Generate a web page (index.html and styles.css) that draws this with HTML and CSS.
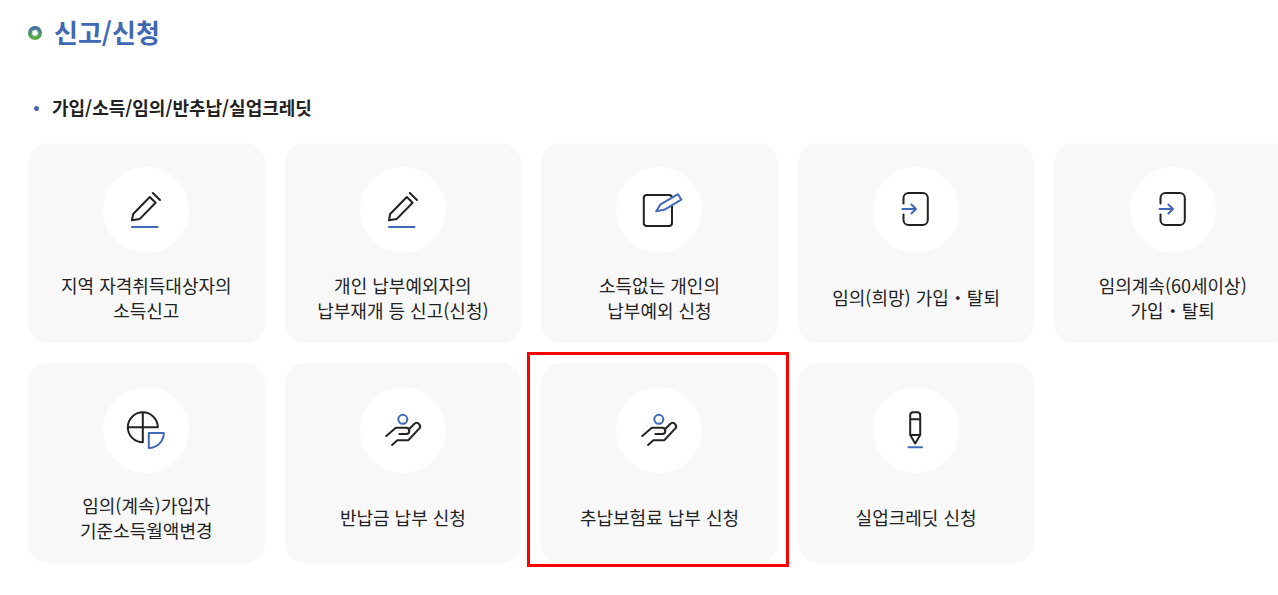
FILE: index.html
```html
<!DOCTYPE html>
<html lang="ko">
<head>
    <meta charset="UTF-8">
    <meta name="viewport" content="width=device-width, initial-scale=1.0">
    <title>신고/신청</title>
    <link rel="stylesheet" href="styles.css">
</head>
<body>
    <svg class="symbols" aria-hidden="true">
        <symbol id="icon-edit" viewBox="0 0 86 86">
            <path d="M29 53.3L30.2 47L46.8 30L52.6 35.7L36.6 52.1ZM49.8 26L57 33"/>
            <path class="blue" d="M29 60H54.5"/>
        </symbol>
        <symbol id="icon-note" viewBox="0 0 86 86">
            <rect x="27.8" y="28" width="28.2" height="31" rx="3"/>
            <path class="blue pen" d="M40.2 44.2L44.2 37.7L62 27.2L65.3 32.6L48.2 42.8Z"/>
        </symbol>
        <symbol id="icon-enter" viewBox="0 0 86 86">
            <path d="M30.5 36.5V31A5 5 0 0 1 35.5 26H49.8A5 5 0 0 1 54.8 31V53A5 5 0 0 1 49.8 58H35.5A5 5 0 0 1 30.5 53V47.5"/>
            <path class="blue" d="M29.5 42H43M38.4 37.5L43 42L38.4 46.5"/>
        </symbol>
        <symbol id="icon-chart" viewBox="0 0 86 86">
            <path d="M39.8 25.2V55.3A15 15 0 1 1 54.8 40.3H24.8"/>
            <path class="blue" d="M45.8 46H60.8A15 15 0 0 1 45.8 61Z"/>
        </symbol>
        <symbol id="icon-hand" viewBox="0 0 86 86">
            <circle class="blue" cx="42.8" cy="32.3" r="4.5"/>
            <path d="M26.3 49L35.8 40.8H46.2A3.1 3.1 0 0 1 46.2 47H39.4"/>
            <path d="M48.8 42.5L54.2 37A3.4 3.4 0 0 1 59.2 41.6L48.2 53.3H37.4L32.1 58"/>
        </symbol>
        <symbol id="icon-pencil" viewBox="0 0 86 86">
            <path d="M37.2 48V28.3A3 3 0 0 1 40.2 25.3H44.2A3 3 0 0 1 47.2 28.3V48L42.2 56.5ZM37.2 32.3H47.2M37.2 48H47.2"/>
            <path class="blue" d="M35.5 60.3H49"/>
        </symbol>
    </svg>

    <main>
        <h1>신고/신청</h1>
        <h2>가입/소득/임의/반추납/실업크레딧</h2>
        <ul class="menu">
            <li><a class="card" href="#">
                <span class="icon"><svg><use href="#icon-edit"/></svg></span>
                <span class="name">지역 자격취득대상자의<br>소득신고</span>
            </a></li>
            <li><a class="card" href="#">
                <span class="icon"><svg><use href="#icon-edit"/></svg></span>
                <span class="name">개인 납부예외자의<br>납부재개 등 신고(신청)</span>
            </a></li>
            <li><a class="card" href="#">
                <span class="icon"><svg><use href="#icon-note"/></svg></span>
                <span class="name">소득없는 개인의<br>납부예외 신청</span>
            </a></li>
            <li><a class="card" href="#">
                <span class="icon"><svg><use href="#icon-enter"/></svg></span>
                <span class="name">임의(희망) 가입・탈퇴</span>
            </a></li>
            <li><a class="card" href="#">
                <span class="icon"><svg><use href="#icon-enter"/></svg></span>
                <span class="name">임의계속(60세이상)<br>가입・탈퇴</span>
            </a></li>
            <li><a class="card" href="#">
                <span class="icon"><svg><use href="#icon-chart"/></svg></span>
                <span class="name">임의(계속)가입자<br>기준소득월액변경</span>
            </a></li>
            <li><a class="card" href="#">
                <span class="icon"><svg><use href="#icon-hand"/></svg></span>
                <span class="name">반납금 납부 신청</span>
            </a></li>
            <li><a class="card selected" href="#">
                <span class="icon"><svg><use href="#icon-hand"/></svg></span>
                <span class="name">추납보험료 납부 신청</span>
            </a></li>
            <li><a class="card" href="#">
                <span class="icon"><svg><use href="#icon-pencil"/></svg></span>
                <span class="name">실업크레딧 신청</span>
            </a></li>
        </ul>
    </main>
</body>
</html>
```
FILE: styles.css
```css
* {
    box-sizing: border-box;
}
body {
    margin: 0;
    background-color: #ffffff;
    color: #222222;
    font-family: "Noto Sans CJK KR", sans-serif;
    font-size: 18px;
    overflow-x: hidden;
}
main {
    padding: 13px 0 32px 28px;
    /* the card grid runs past the right edge */
    margin-right: -13px;
}
h1, h2 {
    display: flex;
    align-items: center;
    margin: 0;
}
h1 {
    gap: 12px;
    color: #3f68b5;
    font-size: 26px;
    line-height: 38px;
}
h1::before {
    content: "";
    width: 14px;
    height: 14px;
    margin-top: 2px;
    border-radius: 50%;
    background: radial-gradient(circle, #ffffff 2px, transparent 4px), linear-gradient(#4168b4, #5bb531);
}
h2 {
    gap: 13px;
    margin-top: 43px;
    padding-left: 6px;
    font-size: 18px;
    line-height: 26px;
}
h2::before {
    content: "";
    width: 5px;
    height: 5px;
    margin-top: 2px;
    border-radius: 50%;
    background-color: #4a63b0;
}
.menu {
    display: grid;
    grid-template-columns: repeat(5, 1fr);
    gap: 20px;
    margin: 23px 0 0;
    padding: 0;
    list-style: none;
}
.card {
    position: relative;
    display: flex;
    flex-direction: column;
    align-items: center;
    min-height: 200px;
    padding: 24px 0 1px;
    border-radius: 20px;
    background-color: #f8f8f8;
    color: #222222;
    text-decoration: none;
}
.selected::after {
    content: "";
    position: absolute;
    top: -11px;
    right: -11px;
    bottom: -4px;
    left: -14px;
    border: 3px solid #ff0000;
}
.icon {
    width: 86px;
    height: 86px;
    border-radius: 50%;
    background-color: #ffffff;
}
.icon svg {
    display: block;
    width: 86px;
    height: 86px;
}
.name {
    display: flex;
    flex: 1;
    align-items: center;
    line-height: 25px;
    text-align: center;
}
.symbols {
    display: none;
}
symbol {
    fill: none;
    stroke: #222222;
    stroke-width: 2;
    stroke-linecap: round;
    stroke-linejoin: round;
}
.blue {
    stroke: #4169b8;
}
.pen {
    fill: #ffffff;
}
```
